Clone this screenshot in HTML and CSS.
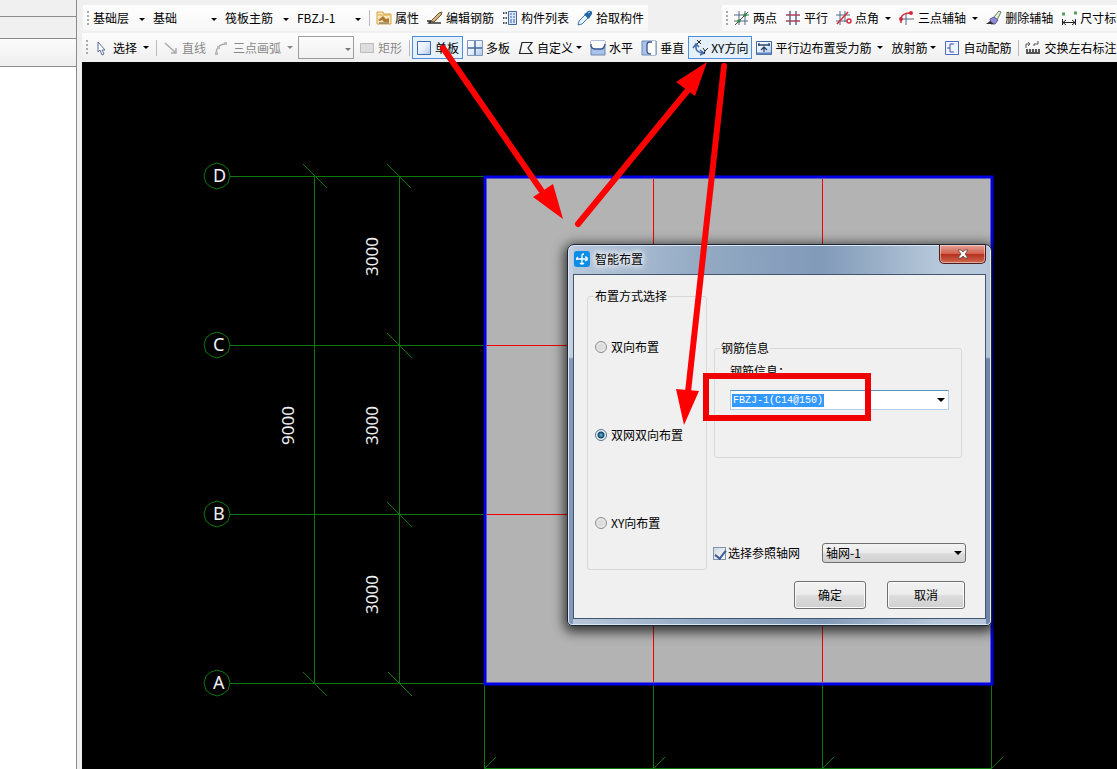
FILE: index.html
```
<!DOCTYPE html>
<html lang="zh-CN">
<head>
<meta charset="utf-8">
<title>筏板主筋 FBZJ-1</title>
<link rel="stylesheet" href="styles.css">
</head>
<body>
<aside class="side">
  <div class="side-head"></div>
  <div class="side-tabs"></div>
  <div class="side-tools"></div>
  <div class="side-body"></div>
</aside>
<main class="main">
  <header class="toolbars">
    <div class="row row-top">
      <div class="bar bar-component">
        <span class="grip"></span>
        <span class="pick pick-floor"><select aria-label="楼层"><option>基础层</option></select></span>
        <span class="pick pick-type"><select aria-label="构件类型"><option>基础</option></select></span>
        <span class="pick pick-type"><select aria-label="构件"><option>筏板主筋</option></select></span>
        <span class="pick pick-type"><select aria-label="名称"><option>FBZJ-1</option></select></span>
        <span class="sep"></span>
        <button class="tool"><svg class="icon" viewBox="0 0 16 16"><path d="M1 2h6l1 2h7v10H1z" fill="#fbe9bd" stroke="#d9a441"/><path d="M2 5h12" stroke="#d9a441"/><path d="M2 10l5-4 3 3 3-1v4H8l-2-2-2 1z" fill="#ac7b35"/><path d="M3 13h10" stroke="#665540"/></svg>属性</button>
        <button class="tool"><svg class="icon" viewBox="0 0 16 16"><path d="M0 11h4l-2 2h12" fill="none" stroke="#333" stroke-width="1.5"/><path d="M4 11l8-8 3-1-1 3-7 7z" fill="#d7b779" stroke="#6b5430"/></svg>编辑钢筋</button>
        <button class="tool"><svg class="icon" viewBox="0 0 16 16"><path d="M1 3h4M1 8h4M1 13h4" stroke="#456" stroke-width="2" stroke-dasharray="1.500 1"/><path d="M6.500 1.500h8v13h-8z" fill="#dce8fa" stroke="#47679c"/><path d="M8 4h5M8 7h5M8 10h5M8 12h5" stroke="#3667b0" stroke-dasharray="2 1"/></svg>构件列表</button>
        <button class="tool"><svg class="icon" viewBox="0 0 16 16"><path d="M1 15l1-4 6-6 3 3-6 6z" fill="#e8f3ff" stroke="#3c78ad"/><path d="M7 4l5 5 1-2 2-3c1-3-2-4-4-3L9 3z" fill="#2467a5"/><path d="M11 3l2-1" stroke="#a5d2f5"/></svg>拾取构件</button>
      </div>
      <div class="bar bar-axis">
        <span class="grip"></span>
        <button class="tool"><svg class="icon" viewBox="0 0 16 16"><path d="M0 5h15M0 11h14M5 1v14M11 1v14" stroke="#53698e"/><path d="M1 15L14 2" stroke="#444"/><path d="M4 12l2-2M10 6l2-2" stroke="#2a8b31" stroke-width="3"/></svg>两点</button>
        <button class="tool"><svg class="icon" viewBox="0 0 16 16"><path d="M5 1v14M11 1v14" stroke="#53698e" stroke-width="1.500"/><path d="M1 5h14M1 11h14" stroke="#a9435b" stroke-width="1.500"/></svg>平行</button>
        <button class="tool"><svg class="icon" viewBox="0 0 16 16"><path d="M0 5h14M0 11h11M4 1v14M9 1v11" stroke="#53698e"/><path d="M1 14L12 2" stroke="#cf2f3b" stroke-width="1.500"/><circle cx="13" cy="11" r="2" fill="none" stroke="#d22d3b" stroke-width="1.500"/></svg>点角<span class="caret"></span></button>
        <button class="tool"><svg class="icon" viewBox="0 0 16 16"><path d="M2 13V8q1-5 10-5" fill="none" stroke="#d12c3a" stroke-width="1.500"/><path d="M1 9h14M7 4v11" stroke="#53698e"/><circle cx="2" cy="9" r="2" fill="#d12c3a"/><circle cx="12" cy="3" r="2" fill="#d12c3a"/></svg>三点辅轴<span class="caret"></span></button>
        <button class="tool"><svg class="icon" viewBox="0 0 16 16"><path d="M7 8l6-7 2 1-4 8z" fill="#e5f0d3" stroke="#667c5c"/><path d="M4 9l4-2 4 3-3 4H5z" fill="#8f8bd4" stroke="#5a5aa0"/><path d="M0 14h8l-4-3z" fill="#333"/></svg>删除辅轴</button>
        <button class="tool"><svg class="icon" viewBox="0 0 16 16"><path d="M1 4h3M13 3h3" stroke="#55a05a" stroke-width="3"/><path d="M1.500 9v6M14.500 9v6M2 12.500h12M5 10l-3 2.500L5 15M11 10l3 2.500-3 2.500" fill="none" stroke="#222"/></svg>尺寸标注</button>
      </div>
    </div>
    <div class="row row-draw">
      <div class="bar bar-draw">
        <span class="grip"></span>
        <button class="tool"><svg class="icon" viewBox="0 0 16 16"><path d="M4 2v10l2-2 2 5 2-1-2-4h3z" fill="#fff" stroke="#587098"/></svg>选择<span class="caret"></span></button>
        <span class="sep"></span>
        <button class="tool" disabled><svg class="icon" viewBox="0 0 16 16"><path d="M2 3l11 10M13 8v5H8" fill="none" stroke="#aaa" stroke-width="1.500"/></svg>直线</button>
        <button class="tool" disabled><svg class="icon" viewBox="0 0 16 16"><path d="M2 14Q3 3 13 4" fill="none" stroke="#aaa" stroke-width="1.500"/><path d="M1 12h3v3H1zM3 6h3v3H3zM10 2h3v3h-3z" fill="#bbb"/></svg>三点画弧<span class="caret"></span></button>
        <span class="pick pick-arc"><select aria-label="画弧方式" disabled><option></option></select></span>
        <button class="tool" disabled><svg class="icon" viewBox="0 0 16 16"><path d="M1.500 3.500h13v9h-13z" fill="#ddd" stroke="#bbb"/></svg>矩形</button>
        <span class="sep"></span>
        <button class="tool tool-on"><svg class="icon" viewBox="0 0 16 16"><path d="M1.500 1.500h13v13h-13z" fill="url(#pane)" stroke="#426aab"/></svg>单板</button>
        <button class="tool"><svg class="icon" viewBox="0 0 16 16"><path d="M.5.5h15v15H.5z" fill="url(#pane)" stroke="#8197b8"/><path d="M8 1v14M1 8h14" stroke="#426a9b" stroke-width="1.500"/></svg>多板</button>
        <button class="tool tool-tight"><svg class="icon" viewBox="0 0 16 16"><path d="M4 2.500h10L10 8l4 5.500H1.500z" fill="none" stroke="#222" stroke-width="1.200"/></svg>自定义<span class="caret"></span></button>
        <button class="tool"><svg class="icon" viewBox="0 0 16 16"><path d="M1 1h14v14H1z" fill="#a9c2ea" stroke="#7189b1"/><path d="M1 1h14v5q-1 3-4 3H5Q2 9 1 6z" fill="#fff"/><path d="M1 4v2q1 3 4 3h6q3 0 4-5" fill="none" stroke="#34568c" stroke-width="1.300"/></svg>水平</button>
        <button class="tool"><svg class="icon" viewBox="0 0 16 16"><path d="M1 1h14v14H1z" fill="#a9c2ea" stroke="#7189b1"/><path d="M15 1H9Q6 2 6 5v6q0 3 3 4h6z" fill="#fff"/><path d="M11 2H9Q6 2 6 5v6q0 3 4 3" fill="none" stroke="#34568c" stroke-width="1.300"/><path d="M15 1v14" stroke="#7189b1"/></svg>垂直</button>
        <button class="tool tool-on"><svg class="icon" viewBox="0 0 16 16"><path d="M4 5v3q0 4 7 5M1 8l3-4 3 3M8 10l4 3-4 2" fill="none" stroke="#426aa9" stroke-width="1.500"/><path d="M5 0l4 4M9 0L5 4M11 8l2 3 3-3M13 11l-1 3" fill="none" stroke="#222"/></svg>XY方向</button>
        <button class="tool"><svg class="icon" viewBox="0 0 16 16"><path d="M.5 1.500h15v13H.5z" fill="url(#pane)" stroke="#426aab"/><path d="M2 5h12M3 3v3M13 3v3M8 12V8M5 10l3-3 3 3" fill="none" stroke="#29466f" stroke-width="1.300"/><path d="M1 13.500h14" stroke="#5e83bd" stroke-width="2"/></svg>平行边布置受力筋<span class="caret"></span></button>
        <button class="tool tool-tight">放射筋<span class="caret"></span></button>
        <button class="tool"><svg class="icon" viewBox="0 0 16 16"><path d="M1.500 1.500h13v13h-13z" fill="#edf3ff" stroke="#506dbd"/><path d="M10 4H6v8h4M3 8h3" fill="none" stroke="#4057aa"/></svg>自动配筋</button>
        <span class="sep"></span>
        <button class="tool"><svg class="icon" viewBox="0 0 16 16"><path d="M1 8V4h4M3 2l2 2-2 2M9 6V4h4V1" fill="none" stroke="#555"/><path d="M1 9h14v5H1z" fill="#555"/><path d="M3.500 9v3M6.500 9v3M9.500 9v3M12.500 9v3" stroke="#eee"/></svg>交换左右标注</button>
      </div>
    </div>
  </header>
  <section class="canvas">
    <svg class="drawing" aria-label="轴网">
      <defs>
        <linearGradient id="pane" x1="0" y1="0" x2="1" y2="1"><stop offset="0" stop-color="#fff"/><stop offset=".5" stop-color="#e6effb"/><stop offset="1" stop-color="#abc4e9"/></linearGradient>
      </defs>
      <g transform="translate(-82 -62)">
        <g class="axis">
          <path d="M230 176.500h255M230 345.500h255M230 514.500h255M230 683.500h255M314.500 176v508M399.500 176v508"/>
          <path d="M484.500 684v85M653.500 684v85M822.500 684v85M991.500 684v85M484 768.500h508"/>
        </g>
        <path class="tick" d="M303 164l24 24M387 164l24 24M387 333l25 25M387 502l25 25M303 672l24 24M388 672l24 24M485 768l11-11M654 768l11-11M823 768l11-11M992 768l11-11"/>
        <g class="tick">
          <path id="bubble" d="M230 176l-2 7-5 4-6 2-6-2-5-4-2-7 2-7 5-4 6-2 6 2 5 4z"/>
          <use href="#bubble" y="169"/><use href="#bubble" y="338"/><use href="#bubble" y="507"/>
        </g>
        <rect class="slab" x="485" y="177" width="507" height="507"/>
        <path class="inner" d="M653.500 179v503M822.500 179v503M487 345.500h503M487 514.500h503"/>
        <g class="mark">
          <text x="213" y="182">D</text><text x="213" y="351">C</text><text x="213" y="520">B</text><text x="213" y="689">A</text>
        </g>
        <g class="mark size">
          <text transform="translate(378 276) rotate(-90)">3000</text>
          <text transform="translate(378 445) rotate(-90)">3000</text>
          <text transform="translate(378 614) rotate(-90)">3000</text>
          <text transform="translate(294 445) rotate(-90)">9000</text>
        </g>
      </g>
    </svg>
    <form class="dialog" role="dialog" aria-label="智能布置">
      <div class="titlebar">
        <svg class="logo" viewBox="0 0 16 16"><rect width="16" height="16" rx="3" fill="#0c8ce9"/><path d="M8 13V4q0-1 2-1M4 6Q2 7 3 9M2.500 8H13M11 6q3 0 2 3l-2 1M6 12q2 2 4 0" fill="none" stroke="#fff" stroke-width="1.300"/></svg>
        <span class="title">智能布置</span>
        <button type="button" class="close" aria-label="关闭"><svg viewBox="0 0 12 10"><path d="M1 1h3l2 2 2-2h3L8 5l3 4H8L6 7 4 9H1l3-4z" fill="#fff" stroke="#5c4747" stroke-width=".8"/></svg></button>
      </div>
      <div class="client">
        <fieldset class="group modes">
          <legend>布置方式选择</legend>
          <label class="choice"><input type="radio" name="mode">双向布置</label>
          <label class="choice"><input type="radio" name="mode" checked>双网双向布置</label>
          <label class="choice"><input type="radio" name="mode">XY向布置</label>
        </fieldset>
        <div class="options">
          <fieldset class="group rebar">
            <legend>钢筋信息</legend>
            <label for="rebar">钢筋信息：</label>
            <div class="combo"><input id="rebar" type="text" value="FBZJ-1(C14@150)"><button type="button" class="combo-open" aria-label="展开"><span class="caret caret-large"></span></button></div>
          </fieldset>
          <div class="grid-row">
            <label class="choice"><input type="checkbox" checked>选择参照轴网</label>
            <span class="pick pick-grid"><select aria-label="参照轴网"><option>轴网-1</option></select></span>
          </div>
          <div class="actions">
            <button type="button" class="push push-ok">确定</button>
            <button type="button" class="push push-cancel">取消</button>
          </div>
        </div>
      </div>
    </form>
  </section>
</main>
<svg class="notes" aria-hidden="true">
  <path class="stroke" d="M443 48l98 142M578 224L688 90M724 66l-36 326"/>
  <path class="head" d="M563 219l-30-22 20-13zM707 62l-31 20 19 14zM684 425l-8-36 23 2z"/>
  <rect class="frame" x="706" y="376" width="162" height="42"/>
</svg>
</body>
</html>
```
FILE: styles.css
```
* { box-sizing: border-box; }

body {
  margin: 0;
  display: flex;
  position: relative;
  height: 100vh;
  overflow: hidden;
  background: #f0f0f0;
  color: #000;
  font: 12px/14px "Noto Sans CJK SC", sans-serif;
}

button, input, select { font: inherit; color: inherit; }

/* Left panel */
.side {
  flex: none;
  width: 77px;
  display: flex;
  flex-direction: column;
  border-right: 1px solid #8c8c8c;
}
.side-head { height: 17px; border-bottom: 1px solid #8c8c8c; }
.side-tabs { height: 22px; border-bottom: 1px solid #8c8c8c; }
.side-tools {
  height: 28px;
  border-bottom: 1px solid #8c8c8c;
  background: linear-gradient(#fcfcfc, #eee);
}
.side-body { flex: 1; background: #fff; }

.main {
  flex: 1;
  min-width: 0;
  display: flex;
  flex-direction: column;
  padding-left: 5px;
}

/* Toolbars */
.toolbars { padding-top: 5px; overflow: hidden; }
.row { display: flex; justify-content: space-between; gap: 74px; white-space: nowrap; }
.row-top { padding-left: 1px; }
.row-draw { padding-top: 2px; }
.bar {
  display: flex;
  align-items: center;
  height: 26px;
  padding-left: 4px;
  background: linear-gradient(#fefefe, #f7f7f7);
}
.bar-axis { flex: 1; min-width: 0; }
.bar-draw { flex: 1; height: 29px; background: linear-gradient(#fdfdfd, #efefef); }
.grip {
  flex: none;
  width: 2px;
  height: 15px;
  margin-right: 2px;
  background: repeating-linear-gradient(#aaa 0 2px, transparent 2px 4px);
}
.sep { flex: none; width: 1px; height: 16px; margin: 0 2px 0 3px; background: #bbb; }

.tool {
  flex: none;
  display: flex;
  align-items: center;
  gap: 3px;
  height: 23px;
  padding: 0 3px;
  border: 1px solid transparent;
  background: none;
  white-space: nowrap;
}
.tool:disabled { color: #888; }
.tool-on { border-color: #4a90dc; background: #e5f0fb; }
.icon { flex: none; width: 16px; height: 16px; }
.caret {
  flex: none;
  width: 6px;
  margin-left: 3px;
  border: 3px solid transparent;
  border-top-color: currentColor;
  border-bottom-width: 0;
}
.tool-tight .caret { margin-left: 0; }
.caret-large { width: 8px; margin: 0; border-width: 4px 4px 0; }

/* Drop-downs with a drawn arrow */
.pick { position: relative; flex: none; display: flex; }
.pick select {
  appearance: none;
  width: 100%;
  height: 22px;
  padding: 0 12px 0 0;
  border: 0;
  border-radius: 0;
  background: none;
}
.pick::after {
  content: "";
  position: absolute;
  right: 5px;
  top: 50%;
  border: 3px solid transparent;
  border-top-color: #000;
  border-bottom-width: 0;
  pointer-events: none;
}
.pick-floor { width: 58px; margin-left: 1px; }
.pick-type { width: 72px; }
.bar-component .pick-floor select { padding-left: 1px; }
.bar-component .pick-type select { padding-left: 3px; }
.pick-arc { width: 56px; margin: 0 1px; }
.pick-arc select { height: 23px; border: 1px solid #777; }
.pick-arc::after { right: 3px; border-top-color: #777; }

/* Drawing area */
.canvas { position: relative; flex: 1; min-height: 0; background: #000; overflow: hidden; }
.drawing { display: block; width: 100%; height: 100%; }
.axis { fill: none; stroke: #0c780c; }
.tick { fill: none; stroke: #0c780c; }
.slab { fill: #b3b3b3; stroke: #0000e6; stroke-width: 3; }
.inner { fill: none; stroke: #f00000; }
.mark { fill: #f0f0f0; font: 18px "Noto Sans", sans-serif; }
.size { font-size: 17px; }

/* Dialog */
.dialog {
  position: absolute;
  left: 485px;
  top: 182px;
  width: 425px;
  padding: 0 5px 6px;
  border: 1px solid #1d2733;
  border-radius: 7px 7px 5px 5px;
  background:
    linear-gradient(#c4d0df 0 112px, #8298b8 114px) left / 5px 100% no-repeat,
    linear-gradient(#b5c5d7 0 112px, #6e86ab 114px) right / 5px 100% no-repeat,
    linear-gradient(90deg, #b9c9dc, #93a9c3 32%, #819ab8 60%, #b7c8da 88%);
  box-shadow: inset 0 0 0 1px #dce8f4, 0 3px 12px 3px rgba(0, 0, 0, .7);
}
.titlebar { display: flex; align-items: center; height: 29px; padding: 0 0 2px 1px; }
.logo { width: 16px; height: 16px; margin-right: 5px; }
.title { flex: 1; text-shadow: 0 0 6px #fff, 0 0 6px #fff, 0 0 10px #fff; }
.close {
  align-self: flex-start;
  display: flex;
  align-items: center;
  justify-content: center;
  width: 47px;
  height: 19px;
  padding: 0;
  border: 1px solid #4b1d1d;
  border-top: 0;
  border-radius: 0 0 5px 5px;
  background: linear-gradient(#e4a396, #d2604d 48%, #b5301d 52%, #cf6a50);
  box-shadow: inset 0 0 0 1px rgba(255, 255, 255, .45);
}
.close svg { width: 12px; height: 10px; }
.client {
  display: flex;
  align-items: flex-start;
  gap: 6px;
  padding: 14px 20px 9px 13px;
  border: 1px solid #43566e;
  background: #f0f0f0;
}
.group {
  min-width: 0;
  margin: 0;
  border: 1px solid #d8d8d8;
  border-radius: 3px;
}
.group legend { padding: 0 1px; }
.modes {
  flex: none;
  width: 120px;
  display: flex;
  flex-direction: column;
  gap: 74px;
  padding: 37px 0 39px 7px;
}
.modes legend { margin-left: -1px; }
.choice { display: flex; align-items: center; gap: 4px; white-space: nowrap; }
.choice input { appearance: none; flex: none; margin: 0; }
.choice input[type="radio"] {
  width: 12px;
  height: 12px;
  border: 1px solid #8a8a8a;
  border-radius: 50%;
  background: radial-gradient(#ddd 40%, #fafafa);
}
.choice input[type="radio"]:checked {
  border-color: #52708c;
  background: radial-gradient(circle, #5fc3e8 0, #12405f 3px, #eef4f8 4px);
}
.choice input[type="checkbox"] {
  position: relative;
  width: 13px;
  height: 13px;
  border: 1px solid #8295a8;
  background: linear-gradient(135deg, #cfd6dd, #fff);
}
.choice input[type="checkbox"]:checked::after {
  content: "";
  position: absolute;
  left: 3px;
  top: 0;
  width: 5px;
  height: 9px;
  border: solid #3d5a99;
  border-width: 0 2px 2px 0;
  transform: rotate(38deg);
}
.options { flex: 1; min-width: 0; display: flex; flex-direction: column; }
.rebar { margin: 52px 3px 0 1px; padding: 9px 12px 47px 15px; }
.rebar legend { margin-left: -10px; }
.rebar label { display: block; }
.combo {
  display: flex;
  align-items: center;
  justify-content: space-between;
  height: 20px;
  margin-top: 12px;
  padding-left: 1px;
  border: 1px solid #b5cfe7;
  border-top-color: #5794bf;
  background: #fff;
}
.combo input {
  width: 92px;
  height: 13px;
  padding: 0 1px;
  border: 0;
  background: #3399ff;
  color: #fff;
  font: 10px/13px "Liberation Mono", monospace;
}
.combo-open { height: 18px; padding: 0 3px; border: 0; background: none; }
.combo-open .caret { display: block; }
.grid-row { display: flex; align-items: center; justify-content: space-between; margin-top: 85px; }
.grid-row .choice { gap: 2px; }
.pick-grid { width: 144px; margin-right: -1px; }
.pick-grid select {
  height: 20px;
  padding: 0 16px 0 3px;
  border: 1px solid #707070;
  border-radius: 3px;
  background: linear-gradient(#f2f2f2, #ebebeb 50%, #ddd 50%, #cfcfcf);
}
.pick-grid::after { right: 4px; top: 8px; border-width: 4px 4px 0; }
.actions { display: flex; justify-content: flex-end; gap: 21px; margin-top: 18px; }
.push {
  height: 28px;
  padding: 0;
  border: 1px solid #707070;
  border-radius: 3px;
  background: linear-gradient(#f2f2f2, #ebebeb 50%, #ddd 50%, #cfcfcf);
  box-shadow: inset 0 0 0 1px #fbfbfb;
}
.push-ok { width: 72px; }
.push-cancel { width: 78px; }

/* Red annotations over the whole window */
.notes { position: absolute; left: 0; top: 0; width: 100%; height: 100%; pointer-events: none; }
.stroke { fill: none; stroke: #fe0000; stroke-width: 6; stroke-linecap: round; }
.head { fill: #fe0000; }
.frame { fill: none; stroke: #f00000; stroke-width: 6; }
```
